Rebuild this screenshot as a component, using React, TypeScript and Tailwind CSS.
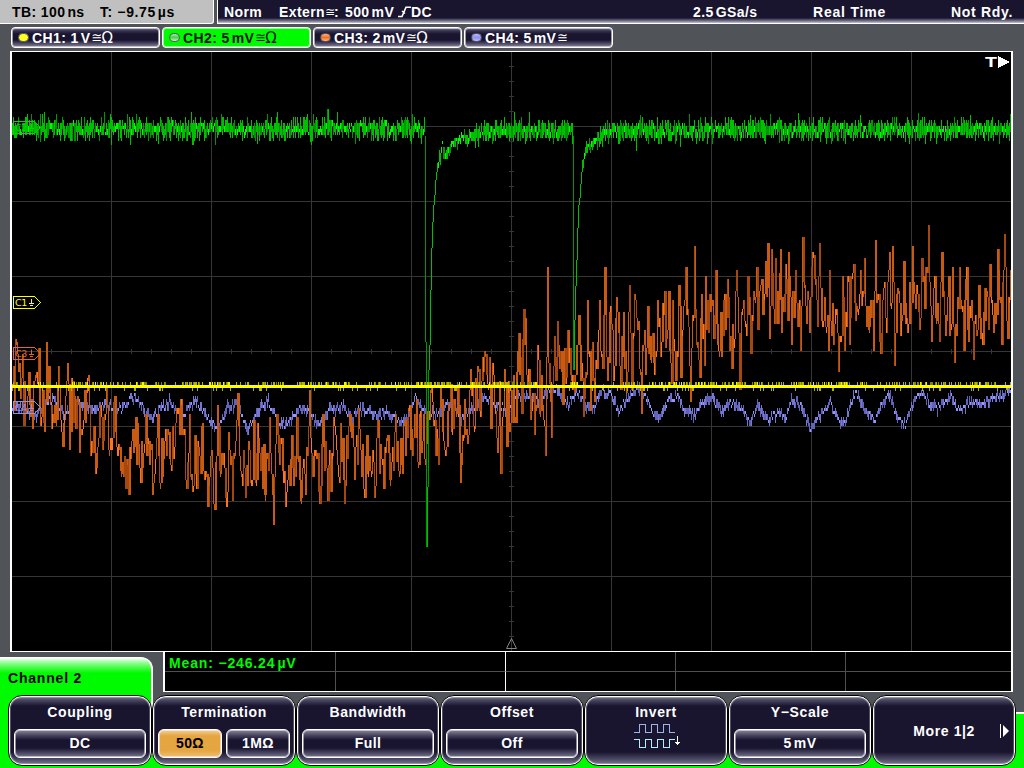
import React from "react";

type Pt = [number, number];

const toPts = (s: string): Pt[] => s.trim().split(/\s+/).map((p) => p.split(",").map(Number) as Pt);

const CH3 = toPts(`12,385 13,367 14,410 15,340 18,372 20,399 22,355 23,427 27,395 31,398 32,430 35,376 38,349 40,426 42,390 44,433 46,343
50,405 51,429 54,405 58,367 60,420 62,448 65,395 67,364 69,451 71,379 75,430 76,400 79,453 83,420 84,391 88,376 90,457 96,469 99,410 102,449
106,387 109,450 114,397 117,455 120,472 124,455 128,496 131,440 135,418 140,484 145,413 149,465 152,496 157,413 159,484 164,440 167,430 171,472
177,410 181,400 186,490 189,413 192,493 194,436 196,490 202,423 207,508 211,450 214,511 217,406 222,465 226,508 228,433 232,502 237,394 241,475
245,499 248,440 251,480 253,421 255,484 257,424 264,496 269,418 273,526 276,415 279,465 281,439 285,508 291,436 293,487 296,418 300,502 303,460
305,496 309,391 312,478 315,450 319,505 322,415 327,502 329,450 330,493 333,418 339,483 340,424 344,505 349,415 354,481 358,409 364,499 366,436
370,470 374,499 377,421 383,490 387,436 390,481 395,415 399,473 402,475 404,420 405,455 408,409 412,457 416,400 417,463 420,410 421,453 423,415
425,466 428,410 431,388 433,425 438,466 440,388 442,431 446,448 450,385 452,430 457,385 460,484 464,398 467,445 470,370 473,426 477,367 480,417
484,352 487,385 489,358 490,430 492,362 495,410 497,454 499,380 500,475 504,370 506,448 508,380 509,433 511,390 512,424 513,376 515,424 518,334
521,415 523,310 525,319 527,385 530,421 532,400 534,436 537,346 540,410 543,420 545,457 547,268 549,385 551,439 553,365 557,322 559,370 562,406
567,331 571,375 574,393 578,316 580,380 583,418 587,301 590,412 592,343 594,403 599,301 602,370 604,268 607,382 610,307 613,382 616,298 620,391
623,313 626,394 629,286 631,391 634,295 638,320 641,415 644,331 645,375 647,307 650,360 652,333 654,376 657,301 660,358 664,292 666,340 668,292
671,385 672,301 675,382 678,286 680,379 683,305 685,268 687,310 690,403 694,247 696,345 699,379 701,295 704,367 705,277 708,334 711,300 713,340
715,271 718,352 721,358 723,300 727,280 729,350 731,370 736,271 739,391 742,310 745,325 747,277 750,355 753,290 756,268 757,331 760,285 762,315
767,244 769,340 771,250 774,324 775,259 777,325 780,250 781,334 785,265 787,320 788,253 791,346 795,271 800,352 802,238 805,305 809,334 812,253
817,327 819,244 823,322 828,352 829,271 834,325 838,373 842,277 844,352 848,277 849,346 853,265 857,312 864,259 866,328 870,300 873,352 875,241
880,355 884,283 886,334 889,253 890,305 892,247 894,367 897,289 901,322 903,262 906,318 910,325 912,247 915,310 919,331 921,259 924,310 928,226
931,343 934,277 936,320 939,343 941,253 945,337 948,275 949,337 952,268 954,364 959,268 963,352 966,268 968,343 971,300 973,361 978,286 982,346
986,292 988,331 989,265 992,315 995,325 997,250 1001,346 1004,235 1007,340 1009,300 1011,259`);

const CH4 = toPts(`12,407 28,410 34,419 42,406 53,397 64,415 78,400 94,413 104,403 120,410 129,398 137,400 150,419 158,411 169,401 182,417 195,400
205,414 217,430 227,406 237,404 247,430 252,421 262,405 268,402 278,424 287,424 300,408 310,411 318,426 328,411 342,405 352,421 358,408 376,416
388,412 400,424 412,408 416,396 422,411 430,412 440,414 444,406 454,405 461,420 475,404 482,398 492,402 500,407 512,410 516,392 522,401 530,396
537,403 545,392 556,389 568,404 576,390 585,405 593,408 602,390 611,395 618,412 626,400 636,388 645,396 652,412 660,418 668,400 678,396 684,411
694,416 702,403 710,398 722,412 730,402 740,408 750,423 757,407 766,418 780,414 785,420 791,399 800,407 811,429 820,414 829,402 840,423 846,420
855,392 865,411 875,421 886,396 890,396 897,418 905,424 914,400 920,393 928,402 937,409 950,398 960,410 970,402 980,404 990,400 1000,395 1008,390
1012,391`);

const CH2 = toPts(`12,128 424,128 425,136 427,547 428,487 429,370 430,345 431,290 432,248 433,222 434,205 435,195 436,180 438,163 440,154 442,146
445,155 450,148 455,142 465,137 480,134 490,130 572,130 573,136 574,370 575,320 576,286 577,260 578,228 579,205 580,198 581,184 582,172 583,160
585,151 588,145 596,140 605,131 620,130 1012,129`);

function makeRng(seed: number) {
  let s = seed;
  return () => {
    s = (s * 1664525 + 1013904223) >>> 0;
    return s / 4294967296;
  };
}

function at(pts: Pt[], x: number) {
  let i = 0;
  while (i < pts.length - 2 && pts[i + 1][0] < x) i++;
  const [x0, y0] = pts[i];
  const [x1, y1] = pts[i + 1];
  return y0 + (y1 - y0) * Math.min(1, Math.max(0, (x - x0) / (x1 - x0)));
}

const q = (y: number) => Math.round(y / 3) * 3;

type Spans = [string, string, string];
const add = (out: Spans, shade: number, x: number, a: number, b: number, w = 1) => {
  out[shade] += `M${x} ${a}h${w}V${b}h-${w}z`;
};

function buildOrange(): Spans {
  const out: Spans = ["", "", ""];
  const rnd = makeRng(77);
  let prev = at(CH3, 12);
  const anchors = new Map(CH3.map(([x, y]) => [x, y]));
  for (let x = 12; x < 1011; x++) {
    const anchor = anchors.get(x);
    let y: number;
    if (anchor !== undefined) y = anchor;
    else {
      const l = at(CH3, x);
      const mean = (at(CH3, x - 6) + at(CH3, x - 3) + at(CH3, x + 3) + at(CH3, x + 6)) / 4;
      y = l * 0.6 + mean * 0.4 + (rnd() - 0.5) * 52;
    }
    const a = q(Math.min(prev, y));
    const b = Math.max(a + 6, q(Math.max(prev, y)));
    const tall = b - a >= 18;
    const shade = tall ? (rnd() < 0.4 ? 0 : 1) : rnd() < 0.45 ? 2 : 1;
    add(out, shade, x, a, b, tall && rnd() < 0.5 ? 2 : 1);
    prev = y;
  }
  return out;
}

function buildBlue(): Spans {
  const out: Spans = ["", "", ""];
  const rnd = makeRng(1234);
  for (let x = 12; x < 1012; x++) {
    const y = at(CH4, x) + (rnd() - 0.5) * 7;
    const h = 3 + Math.floor(rnd() * 3) * 3;
    const a = q(y - h / 2);
    add(out, h === 3 ? 2 : rnd() < 0.6 ? 0 : 1, x, a, a + h);
  }
  return out;
}

function buildGreen(): Spans {
  const out: Spans = ["", "", ""];
  const rnd = makeRng(4321);
  const peaks: Record<number, number> = { 44: 112, 104: 112, 191: 112, 277: 112, 327: 109, 328: 109, 337: 112, 514: 112, 529: 112, 640: 115, 750: 115, 798: 113, 860: 115, 918: 113, 970: 115 };
  const dips: Record<number, number> = { 40: 142, 111: 145, 130: 145, 192: 145, 193: 145, 215: 145, 310: 142, 311: 145, 475: 148, 636: 151, 680: 147, 779: 143, 820: 142, 905: 142 };
  for (let x = 12; x < 1012; x++) {
    let a: number;
    let b: number;
    if ((x >= 425 && x < 438) || (x >= 573 && x < 583)) {
      const y0 = at(CH2, x);
      const y1 = at(CH2, x + 1);
      a = Math.round(Math.min(y0, y1));
      b = Math.max(a + 4, Math.round(Math.max(y0, y1)));
      add(out, b - a > 60 ? 0 : 1, x, a, b);
      continue;
    }
    const recovering = (x > 437 && x < 475) || (x > 582 && x < 597);
    const m = at(CH2, x) + 0.5;
    const c = m + (rnd() + rnd() - 1) * (recovering ? 5 : 7);
    const half = 2 + rnd() * (recovering ? 4 : 8);
    a = q(c - half);
    b = q(c + half);
    if (peaks[x]) a = peaks[x];
    if (dips[x]) b = dips[x];
    if (b - a < 3) b = a + 3;
    add(out, b - a <= 6 ? 2 : rnd() < 0.3 ? 0 : 1, x, a, b);
  }
  return out;
}

function buildYellow(): Spans {
  const out: Spans = ["", "", ""];
  const rnd = makeRng(99);
  let x = 12;
  while (x < 1011) {
    if (rnd() < 0.3) {
      const end = x + 4 + rnd() * 12;
      while (x < end && x < 1011) {
        const r = rnd();
        if (r < 0.55) add(out, rnd() < 0.35 ? 0 : rnd() < 0.7 ? 1 : 2, x, 382, 385);
        else if (r < 0.68) add(out, 1, x, 388, 391);
        x++;
      }
    } else {
      if (rnd() < 0.4) add(out, 1, x, 382, 385);
      else if (rnd() < 0.25) add(out, 1, x, 388, 391);
      x += 2 + Math.floor(rnd() * 3);
    }
  }
  return out;
}

const ORANGE = buildOrange();
const BLUE = buildBlue();
const GREEN = buildGreen();
const YELLOW = buildYellow();

function Trace({ d, colors }: { d: Spans; colors: [string, string, string] }) {
  return (
    <g>
      {d.map((path, i) => (
        <path key={i} d={path} fill={colors[i]} />
      ))}
    </g>
  );
}

function Tag({ y, label, color }: { y: number; label: string; color: string }) {
  return (
    <g stroke={color} fill="none">
      <path d={`M13.5 ${y + 0.5}h21l6 6l-6 6h-21z`} />
      <text x="15" y={y + 10} fill={color} stroke="none" className="font-['DejaVu_Sans'] text-[9.5px] font-normal tracking-[-0.3px]">
        {label}
      </text>
      <path d={`M31.5 ${y + 3}v5M29 ${y + 7.5}h5M30 ${y + 9.5}h3`} />
    </g>
  );
}

const range = (n: number) => Array.from({ length: n }, (_, i) => i);

function Scope() {
  return (
    <div className="ml-[10px] h-[601px] w-[1003px] bg-black">
      <svg width="1003" height="601" viewBox="10 51 1003 601" shapeRendering="crispEdges" className="block">
        <g fill="#363636">
          {range(9).map((i) => (
            <rect key={i} x={111 + i * 100} y="52" width="1" height="599" />
          ))}
          {range(7).map((i) => (
            <rect key={i} x="12" y={126 + i * 75} width="999" height="1" />
          ))}
          {range(49).map((i) => (
            <rect key={i} x={31 + i * 20} y="349" width="1" height="5" />
          ))}
          {range(39).map((i) => (
            <rect key={i} x="509" y={66 + i * 15} width="5" height="1" />
          ))}
        </g>
        <path d="M506.5 648.5h10l-5 -10z" fill="none" stroke="#858585" shapeRendering="auto" />
        <Trace d={BLUE} colors={["#6262b8", "#7777d0", "#9696ff"]} />
        <Trace d={ORANGE} colors={["#a54810", "#c85a12", "#ff741c"]} />
        <Trace d={GREEN} colors={["#009600", "#00be00", "#00fa00"]} />
        <Trace d={YELLOW} colors={["#858500", "#b4b400", "#f4f400"]} />
        <rect x="12" y="385" width="999" height="3" fill="#ffff00" />
        <Tag y={121} label="C2" color="#00d800" />
        <Tag y={296} label="C1" color="#ffff00" />
        <Tag y={347} label="C3" color="#e8681a" />
        <Tag y={401} label="C4" color="#8f8ff0" />
        <text x="985" y="67" fill="#fff" textLength="12" lengthAdjust="spacingAndGlyphs" className="font-['Liberation_Sans'] text-[15px] font-bold tracking-normal">
          T
        </text>
        <path d="M998 56v12l12-6z" fill="#fff" />
        <path d="M10 51h1003v601h-1003zM12 52v599h999v-599z" fill="#fff" fillRule="evenodd" />
      </svg>
    </div>
  );
}

const CHIP = "flex h-[21px] w-[149px] items-center rounded-[4px] border border-white pl-[6px] shadow-[inset_0_0_0_1px_rgba(255,255,255,0.55)]";
const CHIP_DARK = "bg-[linear-gradient(#77748b_0px,#353150_3px,#19152f_6px,#19152f_12px,#353150_14px,#77748b_18px)] text-white";

function Chip({ dot, name, value, ohm, active }: { dot: string; name: string; value: React.ReactNode; ohm?: boolean; active?: boolean }) {
  return (
    <div className={`${CHIP} ${active ? "bg-[#00fa00] text-[#101010]" : CHIP_DARK}`}>
      <span className={`h-[9px] w-[11px] shrink-0 rounded-full border border-[#555560] ${dot}`} />
      <span className="ml-[3px] pt-px leading-[18px] whitespace-pre">{name}: {value}</span>
      <span className="ml-px w-[10px] pt-px font-['DejaVu_Sans'] text-[13px] leading-[18px] font-normal tracking-normal">≅</span>
      {ohm && <span className="pt-px font-['DejaVu_Sans'] text-[15px] leading-[18px] font-normal tracking-normal">Ω</span>}
    </div>
  );
}

const Gap = () => <span className="inline-block w-[2px]" />;

function Header() {
  return (
    <header className="flex h-6 gap-[3px] bg-[#505357] leading-6">
      <div className="flex w-[214px] rounded-br-[3px] border-r border-b border-white bg-[#c0c0c0] pl-3 text-black">
        <span className="w-[88px]">TB: 100<Gap />ns</span>
        <span className="tracking-[0.6px]">T: −9.75<Gap />µs</span>
      </div>
      <div className="flex flex-1 border-b border-l border-white bg-[linear-gradient(#19152f_18px,#3e3a55_19px,#77748b_21px,#c8c8d4_23px)] pl-[6px] whitespace-nowrap text-white">
        <span className="w-[55px]">Norm</span>
        <span className="flex w-[66px]">
          Extern<span className="w-[9px] font-['DejaVu_Sans'] text-[12px] font-normal tracking-[-1px]">≅</span>:
        </span>
        <span className="w-[53px]">500<Gap />mV</span>
        <svg width="13" height="12" viewBox="0 0 13 12" className="mt-1.5 block" fill="none" stroke="#fff" strokeWidth="1.6">
          <path d="M0 10.5h4L8 1.2h5M4 5l3 2.5" />
        </svg>
        <span className="w-[282px]">DC</span>
        <span className="w-[120px]">2.5<Gap />GSa/s</span>
        <span className="w-[138px] tracking-[0.8px]">Real Time</span>
        <span className="tracking-[0.7px]">Not Rdy.</span>
      </div>
    </header>
  );
}

const VALUE = "flex h-[29px] flex-1 items-center justify-center rounded-[6px] border border-white shadow-[inset_0_0_0_1px_rgba(255,255,255,0.5)] ";
const VALUE_DARK = "bg-[linear-gradient(#8c899c,#4b4863_5px,#19152f_10px,#19152f_18px,#4b4863_23px,#77748b)] text-white";

function Key({ title, children }: { title?: string; children?: React.ReactNode }) {
  return (
    <div className="flex h-[71px] w-36 flex-col rounded-[14px] border border-black bg-white p-px">
      <div className="flex flex-1 flex-col rounded-[12px] bg-[linear-gradient(#77748b,#4b4863_3px,#19152f_9px,#19152f_55px,#4b4863_62px,#77748b)] px-1 text-white shadow-[inset_0_0_0_1px_rgba(255,255,255,0.25)]">
        {title && <div className="h-8 pt-[6px] text-center leading-[18px] tracking-[0.6px]">{title}</div>}
        {children}
      </div>
    </div>
  );
}

const Value = ({ children }: { children: React.ReactNode }) => <div className={VALUE + VALUE_DARK}>{children}</div>;

function Menu() {
  return (
    <nav className="col-start-1 row-start-1 mt-[43px] ml-2 flex">
      <Key title="Coupling">
        <div className="flex"><Value>DC</Value></div>
      </Key>
      <Key title="Termination">
        <div className="flex gap-1">
          <div className={VALUE + "bg-[linear-gradient(#f3d09a,#e5a540_6px,#e5a540_20px,#edbd72)] text-black"}>50Ω</div>
          <Value>1MΩ</Value>
        </div>
      </Key>
      <Key title="Bandwidth">
        <div className="flex"><Value>Full</Value></div>
      </Key>
      <Key title="Offset">
        <div className="flex"><Value>Off</Value></div>
      </Key>
      <Key title="Invert">
        <svg width="46" height="27" viewBox="0 0 46 27" className="mx-auto -mt-[6px] block translate-x-px" fill="none" shapeRendering="crispEdges">
          <path d="M0 9.5h5.5v-8h6v8h6v-8h6v8h6v-8h6v8h5" stroke="#9db4e8" />
          <path d="M0 16.5h5.5v8h6v-8h6v8h6v-8h6v8h6v-8h5" stroke="#b4ecf8" />
          <path d="M43.5 13v9M41 19.5h5M42 20.5h3" stroke="#fff" />
        </svg>
      </Key>
      <Key title="Y−Scale">
        <div className="flex"><Value>5<Gap />mV</Value></div>
      </Key>
      <Key>
        <div className="flex h-full items-center justify-end">
          <span className="mt-[2px] mr-[24px] tracking-[0.6px]">More 1|2</span>
          <svg width="11" height="16" viewBox="0 0 11 16" className="block">
            <path d="M1.5 1v14" stroke="#fff" />
            <path d="M4 2v12l6-6z" fill="#fff" />
          </svg>
        </div>
      </Key>
    </nav>
  );
}

function Measurements() {
  return (
    <div className="grid h-10 w-[850px] grid-cols-[171px_170px_170px_170px_1fr] grid-rows-[20px_19px] border-r-2 border-b border-l-2 border-white bg-black">
      {range(10).map((i) => {
        const c = i % 5;
        const edge = c === 4 ? "" : c === 1 ? "border-r border-r-white" : "border-r border-r-[#505050]";
        return (
          <div key={i} className={`${edge} ${i < 5 ? "border-b border-b-[#505050]" : ""} leading-[22px] whitespace-nowrap text-[#00fa00]`}>
            {i === 0 && <span className="pl-1 tracking-[0.85px]">Mean: −246.24<Gap />µV</span>}
          </div>
        );
      })}
    </div>
  );
}

export default function App() {
  return (
    <div className="h-[768px] w-[1024px] overflow-hidden bg-[#505357] font-['Liberation_Sans',sans-serif] text-[14px] font-bold tracking-[0.4px]">
      <Header />
      <div className="flex h-[27px] gap-0.5 pt-[3px] pl-[11px]">
        <Chip dot="bg-[#ffff20]" name="CH1" value={<>1<Gap />V</>} ohm />
        <Chip dot="bg-[linear-gradient(#b8d8b8,#40d840,#d8e8d8)]" name="CH2" value={<>5<Gap />mV</>} ohm active />
        <Chip dot="bg-[linear-gradient(#ffb080,#f47020,#ffb080)]" name="CH3" value={<>2<Gap />mV</>} ohm />
        <Chip dot="bg-[linear-gradient(#b8b8ff,#9090f0,#b8b8ff)]" name="CH4" value={<>5<Gap />mV</>} />
      </div>
      <Scope />
      <div className="grid h-[116px]">
        <div className="col-start-1 row-start-1 flex flex-col">
          <div className="flex h-[103px]">
            <div className="mt-[5px] w-[153px] rounded-tr-[12px] border-t border-r-2 border-white bg-[linear-gradient(#ffffff,#a0ffa0_4px,#50fc50_9px,#00fa00_15px)] pt-[5px] pl-2 text-black">
              <span className="leading-[30px] tracking-[0.8px]">Channel 2</span>
            </div>
            <div className="ml-[10px] flex-1">
              <Measurements />
            </div>
            <div className="mt-[60px] w-[9px] border-t-2 border-white bg-[#00fa00]" />
          </div>
          <div className="flex-1 bg-[#00fa00]" />
        </div>
        <Menu />
      </div>
    </div>
  );
}
